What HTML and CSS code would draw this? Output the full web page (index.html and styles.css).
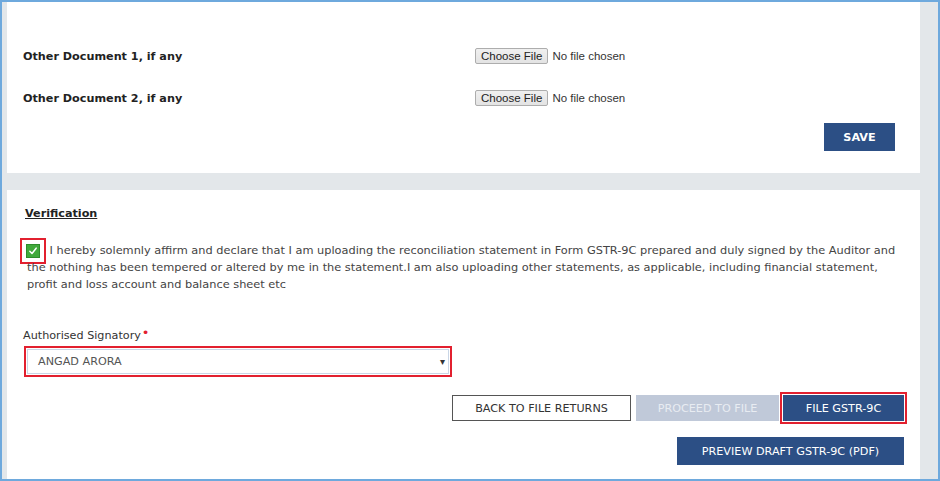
FILE: index.html
```html
<!DOCTYPE html>
<html lang="en">
<head>
  <meta charset="UTF-8">
  <meta name="viewport" content="width=device-width, initial-scale=1">
  <title>GSTR-9C - Verification</title>
  <link rel="stylesheet" href="styles.css">
</head>
<body>
  <div class="frame">
    <section class="panel upload">
      <div class="doc-row">
        <label class="doc-label" for="doc1">Other Document 1, if any</label>
        <div class="file-pick">
          <span class="file-btn">Choose File</span>
          <span class="file-name">No file chosen</span>
        </div>
      </div>
      <div class="doc-row">
        <label class="doc-label" for="doc2">Other Document 2, if any</label>
        <div class="file-pick">
          <span class="file-btn">Choose File</span>
          <span class="file-name">No file chosen</span>
        </div>
      </div>
      <div class="save-row">
        <button class="btn btn-primary btn-save">SAVE</button>
      </div>
    </section>

    <section class="panel verify">
      <h4 class="section-title">Verification</h4>

      <p class="declaration">
        <span class="mark"><span class="tick"><svg viewBox="0 0 12 12" width="10" height="10"><path d="M2.2 6.4 L4.8 9 L9.8 2.6" fill="none" stroke="#fff" stroke-width="1.8" stroke-linecap="round" stroke-linejoin="round"/></svg></span></span>
        I hereby solemnly affirm and declare that I am uploading the reconciliation statement in Form GSTR-9C prepared and duly signed by the Auditor and the nothing has been tempered or altered by me in the statement.I am also uploading other statements, as applicable, including financial statement, profit and loss account and balance sheet etc
      </p>

      <label class="sign-label" for="signatory">Authorised Signatory<span class="req">•</span></label>
      <div class="mark select-mark">
        <div class="select-box">
          <span>ANGAD ARORA</span>
          <span class="caret">▾</span>
        </div>
      </div>

      <div class="actions">
        <button class="btn btn-outline">BACK TO FILE RETURNS</button>
        <button class="btn btn-muted">PROCEED TO FILE</button>
        <span class="mark btn-mark"><button class="btn btn-primary btn-file">FILE GSTR-9C</button></span>
      </div>
      <div class="actions preview-row">
        <button class="btn btn-primary btn-preview">PREVIEW DRAFT GSTR-9C (PDF)</button>
      </div>
    </section>
  </div>
</body>
</html>
```

FILE: styles.css
```css
body {
  margin: 0;
  background-color: #fff;
  color: #333;
  font-family: 'DejaVu Sans', Verdana, sans-serif;
  font-size: 11.2px;
}
.frame {
  height: 481px;
  box-sizing: border-box;
  border: 2px solid #6ea9dd;
  background-color: #e3e7ea;
  padding: 0 18px 0 5px;
  display: flex;
  flex-direction: column;
}
.panel {
  background-color: #fff;
  padding: 0 16px;
}
.upload {
  height: 171px;
  box-sizing: border-box;
  padding-top: 44px;
  margin-bottom: 17px;
}
.verify {
  flex: 1;
  padding-top: 16px;
}
.doc-row {
  display: flex;
  align-items: center;
  height: 20px;
  margin-bottom: 22px;
}
.doc-label {
  width: 452px;
  font-weight: bold;
  color: #222;
}
.file-pick {
  display: flex;
  align-items: center;
  font-family: 'Liberation Sans', Arial, sans-serif;
  font-size: 11.5px;
  color: #333;
}
.file-btn {
  background: linear-gradient(#f0f0f0, #e3e3e3);
  border: 1px solid #adadad;
  border-radius: 2px;
  padding: 1px 5px;
  margin-right: 4px;
  color: #222;
}
.save-row {
  display: flex;
  justify-content: flex-end;
  margin-top: -7px;
  padding-right: 9px;
}
.btn {
  font-family: 'DejaVu Sans', Verdana, sans-serif;
  font-size: 11.2px;
  height: 26px;
  padding: 0 12px;
  border: 1px solid transparent;
  cursor: pointer;
}
.btn-primary {
  background-color: #2c4f85;
  color: #fff;
}
.btn-save {
  width: 71px;
  height: 28px;
  font-weight: bold;
}
.btn-outline {
  background-color: #fff;
  border-color: #555;
  color: #333;
  width: 179px;
  margin-right: 1px;
}
.btn-muted {
  background-color: #c0c9d9;
  color: #e8ecf2;
  width: 143px;
}
.btn-file {
  width: 121px;
}
.btn-preview {
  width: 227px;
  height: 28px;
}
.section-title {
  margin: 0 0 20px 2px;
  font-size: 11.2px;
  line-height: 16px;
  text-decoration: underline;
  color: #222;
}
.declaration {
  margin: 0 0 36px;
  padding: 0 6px 0 4px;
  font-size: 11.35px;
  line-height: 16.5px;
  color: #444;
}
.mark {
  display: inline-block;
  border: 2px solid #e2202f;
  box-sizing: border-box;
}
.declaration .mark {
  width: 26px;
  height: 26px;
  margin: -5px 0 -5px -7px;
  vertical-align: middle;
  display: inline-flex;
  align-items: center;
  justify-content: center;
}
.tick {
  width: 14px;
  height: 14px;
  box-sizing: border-box;
  background-color: #40a93b;
  border: 1px solid #2e8c2b;
  display: flex;
  align-items: center;
  justify-content: center;
}
.sign-label {
  display: block;
  line-height: 16px;
  margin-bottom: 2px;
  color: #333;
}
.req {
  color: #e2202f;
  font-size: 13px;
  line-height: 10px;
  vertical-align: 2px;
  margin-left: 1px;
}
.select-mark {
  display: block;
  width: 428px;
  margin-left: 1px;
  padding: 1px;
}
.select-box {
  height: 23px;
  border: 1px solid #c9d6e6;
  display: flex;
  align-items: center;
  justify-content: space-between;
  padding: 0 3px 0 10px;
  color: #555;
  font-size: 11.2px;
}
.caret {
  font-size: 10px;
  color: #333;
}
.actions {
  display: flex;
  justify-content: flex-end;
  align-items: center;
  gap: 4px;
  margin-top: 18px;
}
.btn-mark {
  padding: 1px;
  margin: -3px -3px -3px -3px;
}
.preview-row {
  margin-top: 16px;
}
```
